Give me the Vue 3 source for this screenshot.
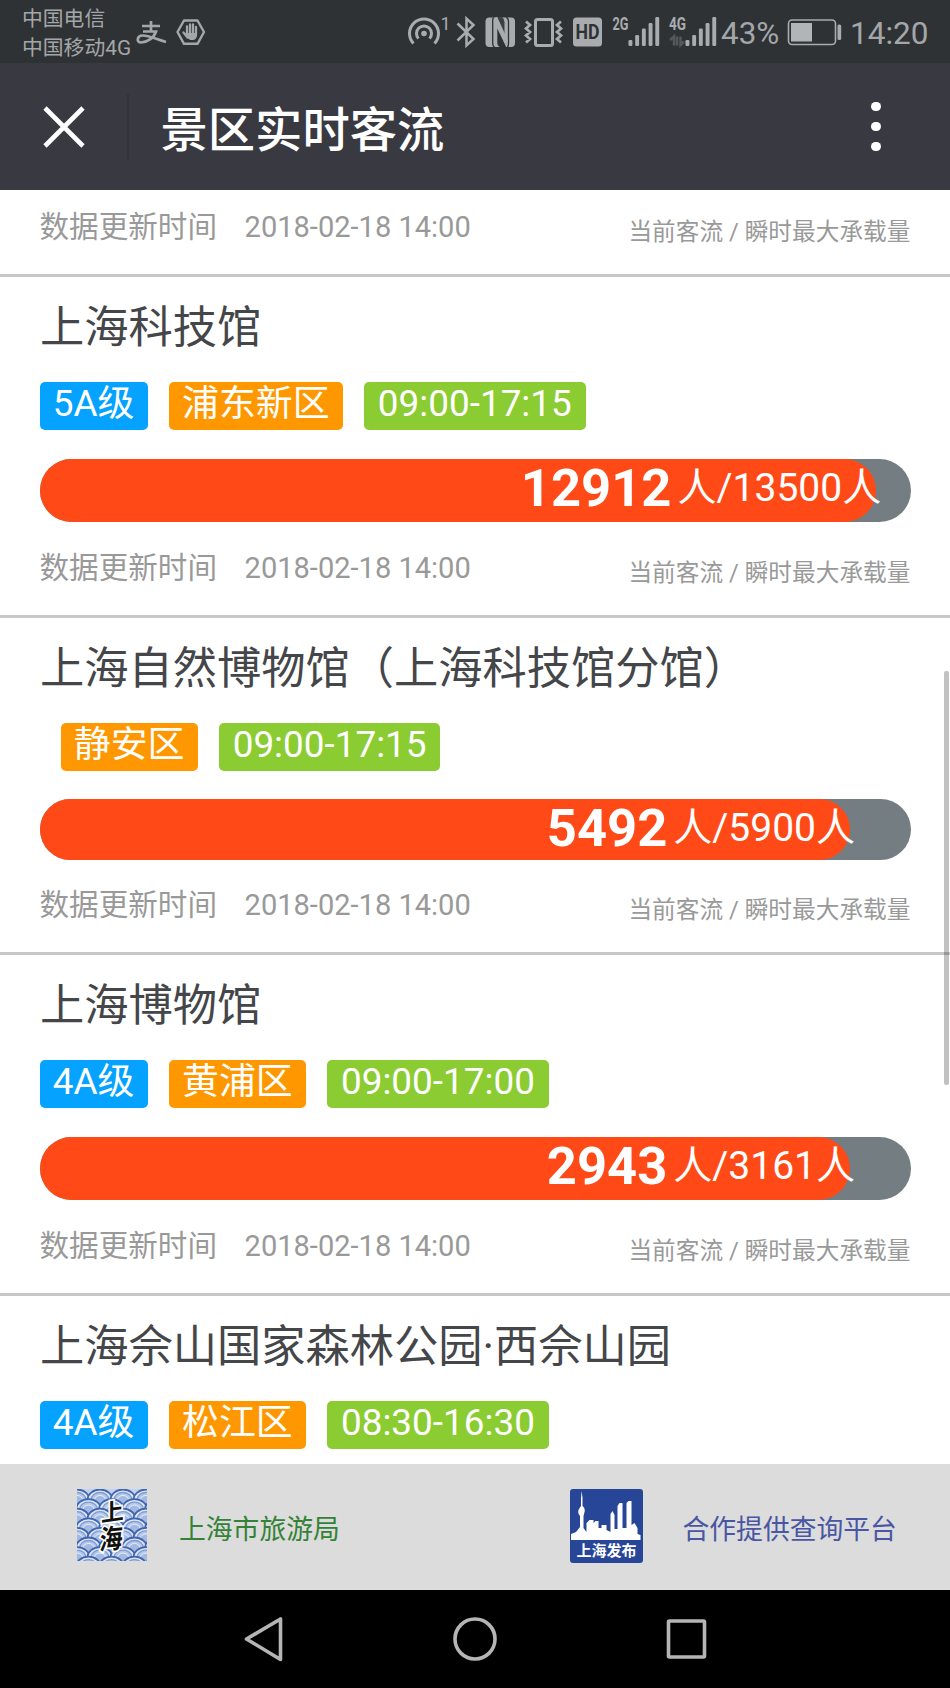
<script setup>
const updated = '2018-02-18 14:00'
const spots = [
  { name: '上海科技馆', level: '5A级', area: '浦东新区', hours: '09:00-17:15', now: 12912, max: 13500, pct: 96 },
  { name: '上海自然博物馆（上海科技馆分馆）', level: '', area: '静安区', hours: '09:00-17:15', now: 5492, max: 5900, pct: 93, compact: true },
  { name: '上海博物馆', level: '4A级', area: '黄浦区', hours: '09:00-17:00', now: 2943, max: 3161, pct: 93 },
  { name: '上海佘山国家森林公园·西佘山园', level: '4A级', area: '松江区', hours: '08:30-16:30' },
]
const bars = [[0, 40], [6.7, 35], [13.4, 28.5], [20.1, 23], [26.8, 17]]
const waves = []
for (let r = 0; r < 9; r++) for (let c = 0; c < 5; c++) waves.push([c * 23 - (r % 2 ? 11.5 : 0), r * 9.6 + 11])
</script>

<template>
  <div class="screen">
    <div class="status">
      <div class="carriers"><span>中国电信</span><span>中国移动4G</span></div>
      <svg class="left-icons" viewBox="132 0 76 63" width="76" height="63" fill="none" stroke="#a4a7a9">
        <path d="M142 26h18M151 21v10M143 31.500h13C154 38 147 42.500 141 42.500c-5 0-4-7 1.500-7 7 0 14 4 23.500 6.500" stroke-width="2.700" />
        <path d="M184 20.500h13.500L204 32l-6.500 11.800H184L177.500 32z" stroke-width="2.400" stroke-linejoin="round" />
        <path d="M187 35V26.500M190 34v-9.500M193 34v-9.500M196 35v-8M183.500 32.500l4 5" stroke-width="2.300" stroke-linecap="round" />
        <path d="M186 33h11v3q-1 4-4 4h-3q-3-2-4-5z" fill="#a4a7a9" stroke="none" />
      </svg>
      <div class="right">
        <svg viewBox="404 0 48 63" width="48" height="63" fill="none" stroke="#a9acae" stroke-width="3">
          <path d="M413.500 43.500a14.500 14.500 0 1 1 21 0M418.500 38.500a7.500 7.500 0 1 1 11 0" />
          <circle cx="424" cy="33.500" r="2.800" fill="#a9acae" stroke="none" />
          <text class="tiny one" x="440.500" y="30" font-size="18">1</text>
        </svg>
        <svg viewBox="452 0 28 63" width="28" height="63" fill="none" stroke="#a9acae" stroke-width="2.500">
          <path d="M457.500 23.500l16 15.500-7 6.500V18.500l7 6.500-16 15.500" />
        </svg>
        <svg viewBox="480 0 40 63" width="40" height="63">
          <rect x="485.500" y="17.500" width="29.500" height="29.500" rx="4" fill="#a9acae" />
          <path d="M497.300 28.500l9 18.700h-6q-3-1.500-3-4.500z" fill="#2f3235" />
          <path d="M496 17.300h6q2.500 1.500 2.500 5v12.500z" fill="#2f3235" opacity=".9" />
          <path d="M493.500 17.500q-.8 1-.8 3v23q0 2.500 2 4M506.500 17.300q2 1.700 2 4v22q0 2.500-1 4" fill="none" stroke="#2f3235" stroke-width="1.300" />
          <path d="M495.500 17.500l11 24" stroke="#a9acae" stroke-width="3.600" />
        </svg>
        <svg viewBox="520 0 48 63" width="48" height="63" fill="none" stroke="#a9acae">
          <rect x="535.500" y="19.500" width="17" height="26" rx="2" stroke-width="3" />
          <path d="M526 21.500l4 3.500-4 3.500 4 3.500-4 3.500 4 3.500-4 3.500M561 21.500l-4 3.500 4 3.500-4 3.500 4 3.500-4 3.500 4 3.500" stroke-width="2.700" />
        </svg>
        <svg viewBox="568 0 40 63" width="40" height="63">
          <rect x="573" y="17.500" width="29" height="29" rx="3.500" fill="#a9acae" />
          <text x="587.500" y="39" text-anchor="middle" font-family="Roboto, sans-serif" font-weight="700" font-size="19.500" textLength="24" lengthAdjust="spacingAndGlyphs" fill="#2f3235">HD</text>
        </svg>
        <svg viewBox="608 0 54 63" width="54" height="63">
          <text class="tiny" x="612.500" y="30" font-size="18" textLength="16" lengthAdjust="spacingAndGlyphs">2G</text>
          <rect v-for="b in bars" :key="b[0]" :x="628.500 + b[0]" :y="b[1]" width="3.900" :height="46 - b[1]" rx="1.300" fill="#a9acae" />
        </svg>
        <svg viewBox="662 0 58 63" width="58" height="63">
          <text class="tiny" x="669" y="30" font-size="18" textLength="17" lengthAdjust="spacingAndGlyphs">4G</text>
          <path d="M670 40l4-3.500v9M677 36.500v9M680.500 36.500v8.500l3.500-3.500" fill="none" stroke="#54585b" stroke-width="2.500" />
          <rect v-for="b in bars" :key="b[0]" :x="685.500 + b[0]" :y="b[1]" width="3.900" :height="46 - b[1]" rx="1.300" fill="#a9acae" />
        </svg>
        <span class="pct">43%</span>
        <svg viewBox="784 0 66 63" width="66" height="63">
          <rect x="788.500" y="20" width="47" height="24.500" rx="3.500" fill="none" stroke="#a9acae" stroke-width="1.600" />
          <rect x="791" y="23" width="21" height="18.500" fill="#b2b5b7" />
          <rect x="837.500" y="24.500" width="3.700" height="15.500" rx="1.500" fill="#a9acae" />
        </svg>
        <span class="clock">14:20</span>
      </div>
    </div>

    <header class="appbar">
      <svg class="close" viewBox="0 0 42 42" width="42" height="42"><path d="M2 2l38 38M40 2L2 40" stroke="#fff" stroke-width="4.600" /></svg>
      <i class="sep"></i>
      <h1>景区实时客流</h1>
      <div class="more"><i></i><i></i><i></i></div>
    </header>

    <main class="list">
      <div class="meta first">
        <span class="label">数据更新时间</span><span class="date">{{ updated }}</span><span class="legend">当前客流 / 瞬时最大承载量</span>
      </div>
      <section v-for="s in spots" :key="s.name" class="spot" :class="{ compact: s.compact }">
        <h2>{{ s.name }}</h2>
        <div class="tags">
          <span v-if="s.level" class="tag blue">{{ s.level }}</span>
          <span v-else class="nolevel"></span>
          <span class="tag orange">{{ s.area }}</span>
          <span class="tag green">{{ s.hours }}</span>
        </div>
        <template v-if="s.max">
          <div class="track">
            <div class="fill" :style="{ width: s.pct + '%' }">
              <b>{{ s.now }}</b><span>人/{{ s.max }}人</span>
            </div>
          </div>
          <div class="meta">
            <span class="label">数据更新时间</span><span class="date">{{ updated }}</span><span class="legend">当前客流 / 瞬时最大承载量</span>
          </div>
        </template>
      </section>
      <i class="scrollbar"></i>
    </main>

    <footer class="partners">
      <div class="partner bureau">
        <svg viewBox="0 0 70 72" width="70" height="72">
          <rect width="70" height="72" fill="#c3d2ee" />
          <g v-for="(w, i) in waves" :key="i" :transform="`translate(${w[0]} ${w[1]})`" stroke="#4064ad">
            <ellipse rx="12.500" ry="10.500" fill="#dbe5f7" stroke-width="1.800" />
            <ellipse rx="9" ry="7.500" fill="#b5c8ea" stroke="#7f9bd0" stroke-width="1.300" />
            <ellipse rx="5.500" ry="4.500" fill="#a2b9e2" stroke="#e6eefa" stroke-width="1" />
          </g>
          <g class="brush">
            <text font-size="23" transform="translate(24 33) rotate(-8) skewX(-8)">上</text>
            <text font-size="27" transform="translate(22 61) rotate(-6) skewX(-10) scale(.86 1)">海</text>
          </g>
        </svg>
        <span>上海市旅游局</span>
      </div>
      <div class="partner release">
        <svg viewBox="0 0 73 74" width="73" height="74">
          <rect width="73" height="74" rx="3" fill="#284698" />
          <path d="M1 51v-6l5-2 4-5V27q-3-3-1-7l2-3V9l.7-7 .8 7v8q3 2 2 6l-1 4v12l3 4v-9l3-3h4v3l2-2h3v7h3v-3h5v5l4 2V25l2-3 2 4v14h3V17l2-3h3v25h4V14l2-2h3v24l3-2 3 5v6l3 1v5z" fill="#fff" />
          <text x="36.500" y="66.500" text-anchor="middle" class="stamp">上海发布</text>
        </svg>
        <span>合作提供查询平台</span>
      </div>
    </footer>

    <nav class="nav">
      <svg viewBox="0 0 950 98" width="950" height="98" fill="none" stroke="#b5b5b5" stroke-width="3.600" stroke-linejoin="round">
        <path d="M246.500 49L280.500 29v40.500z" />
        <circle cx="475" cy="49" r="20" />
        <rect x="668.500" y="31" width="36" height="36" rx="1" />
      </svg>
    </nav>
  </div>
</template>

<style>
body { margin: 0; background: #fff; }
</style>

<style scoped>
.screen { width: 950px; height: 1688px; display: flex; flex-direction: column; overflow: hidden; background: #fff; font-family: Roboto, "Noto Sans CJK SC", sans-serif; }
svg { display: block; flex: none; }
h1, h2 { margin: 0; font-weight: 400; }

.status { height: 63px; flex: none; display: flex; background: #2f3235; color: #a4a7a9; }
.carriers { width: 110px; padding: 5px 0 0 22px; display: flex; flex-direction: column; font-size: 20.800px; line-height: 28.500px; white-space: nowrap; }
.right { margin-left: auto; width: 546px; display: flex; }
.tiny { font-family: Roboto, sans-serif; font-weight: 700; fill: #a9acae; stroke: none; }
.one { font-weight: 400; }
.pct { width: 64px; padding-left: 1px; box-sizing: border-box; font-size: 31.400px; line-height: 67px; }
.clock { font-size: 31.500px; line-height: 67px; }

.appbar { height: 127px; flex: none; display: flex; align-items: center; background: #393a41; color: #fff; }
.close { margin-left: 43px; }
.sep { width: 2px; height: 66px; margin-left: 42px; background: #32333a; }
.appbar h1 { margin: 8px 0 0 31.500px; font-size: 47.300px; font-weight: 500; line-height: 60px; }
.more { margin-left: auto; margin-right: 69.500px; display: flex; flex-direction: column; gap: 10.800px; }
.more i { width: 9.400px; height: 9.400px; border-radius: 50%; background: #fff; }

.list { position: relative; height: 1274px; flex: none; overflow: hidden; }
.meta { height: 93px; padding: 0 39.500px; box-sizing: border-box; display: flex; align-items: baseline; color: #999; line-height: 90px; white-space: nowrap; }
.meta.first { height: 84px; line-height: 73px; }
.label { font-size: 29.600px; }
.date { margin-left: 27.500px; font-size: 29.050px; }
.legend { margin-left: auto; padding-top: 3px; font-size: 23.700px; transform: translateY(2.500px); }
.spot { border-top: 3px solid #c8c8c8; }
.spot h2 { height: 105px; padding-left: 40px; font-size: 44.250px; line-height: 102px; color: #444649; white-space: nowrap; }
.tags { height: 47.500px; padding-left: 39.500px; display: flex; gap: 21px; }
.tag { padding: 0 13.300px; border-radius: 5px; color: #fff; font-size: 36.900px; line-height: 43.500px; }
.nolevel { width: 0; }
.blue { background: #05a2ff; }
.orange { background: #ff9800; }
.green { padding: 0 13.900px; background: #8acc32; }
.track { margin: 29.500px 39.500px 0; height: 63px; border-radius: 32px; background: #747d82; }
.compact .track { margin-top: 28.500px; height: 61px; }
.compact .meta { height: 92px; line-height: 89px; }
.fill { height: 100%; border-radius: 32px; background: #ff4a17; color: #fff; display: flex; justify-content: flex-end; align-items: flex-start; white-space: nowrap; }
.fill b { font-size: 52.500px; font-weight: 700; line-height: 59px; }
.fill span { margin: 0 -5.500px 0 6px; font-size: 39px; line-height: 58px; }
.scrollbar { position: absolute; top: 481px; right: 1.500px; width: 4.500px; height: 414px; border-radius: 2px; background: rgba(0, 0, 0, .24); }

.partners { height: 126px; flex: none; display: flex; background: #dcdcdc; }
.partner { display: flex; padding-top: 25px; box-sizing: border-box; font-size: 26.800px; line-height: 83px; white-space: nowrap; }
.bureau { width: 570px; padding-left: 77px; gap: 32px; color: #338236; }
.release { gap: 39.500px; color: #4956a3; }
.brush { font-family: "Noto Sans CJK SC", sans-serif; font-weight: 700; fill: #111; stroke: #fff; stroke-width: 3.500px; paint-order: stroke; }
.stamp { font-family: "Noto Sans CJK SC", sans-serif; font-size: 15px; font-weight: 700; fill: #fff; }
.nav { height: 98px; flex: none; background: #000; }
</style>
